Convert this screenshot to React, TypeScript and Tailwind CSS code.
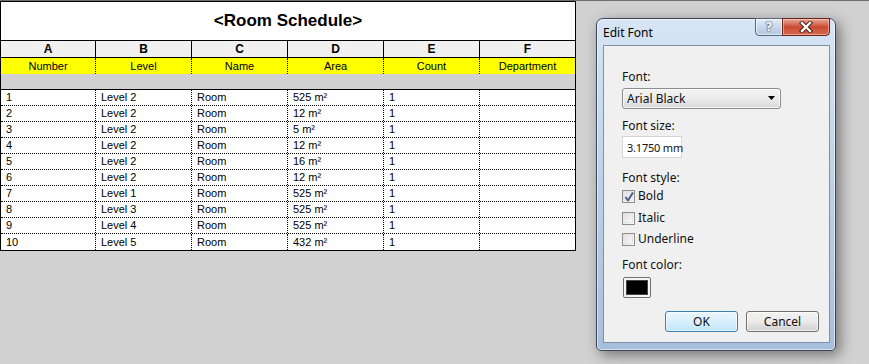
import React from 'react';

const cols = ['A', 'B', 'C', 'D', 'E', 'F'];
const heads = ['Number', 'Level', 'Name', 'Area', 'Count', 'Department'];
const widths = ['w-[95px]', 'w-[96px]', 'w-[96px]', 'w-[96px]', 'w-[96px]', 'flex-1'];

const rows = [
  ['1', 'Level 2', 'Room', '525 m²', '1', ''],
  ['2', 'Level 2', 'Room', '12 m²', '1', ''],
  ['3', 'Level 2', 'Room', '5 m²', '1', ''],
  ['4', 'Level 2', 'Room', '12 m²', '1', ''],
  ['5', 'Level 2', 'Room', '16 m²', '1', ''],
  ['6', 'Level 2', 'Room', '12 m²', '1', ''],
  ['7', 'Level 1', 'Room', '525 m²', '1', ''],
  ['8', 'Level 3', 'Room', '525 m²', '1', ''],
  ['9', 'Level 4', 'Room', '525 m²', '1', ''],
  ['10', 'Level 5', 'Room', '432 m²', '1', ''],
];

function Checkbox({ checked }: { checked?: boolean }) {
  return (
    <div className="w-[13px] h-[13px] border border-[#8e8f8f] bg-gradient-to-br from-[#dcdcdc] to-[#fbfbfb] flex items-center justify-center">
      <div className="w-[9px] h-[9px] border border-[#e6e6e6] bg-gradient-to-br from-[#e2e2e2] to-[#f8f8f8] relative">
        {checked && (
          <svg className="absolute -left-[2px] -top-[3px]" width="12" height="13" viewBox="0 0 12 13">
            <path d="M2.5 7 L5 10.5 L10 2.5" fill="none" stroke="#4a5f8f" strokeWidth="2" strokeLinejoin="round" />
          </svg>
        )}
      </div>
    </div>
  );
}

function Schedule() {
  return (
    <div className="w-[576px] border-x border-t border-black font-[family-name:'Liberation_Sans',Arial,sans-serif] text-black">
      <div className="h-[39px] bg-white border-b border-black flex items-center justify-center text-[17px] font-bold">
        &lt;Room Schedule&gt;
      </div>
      <div className="h-[17px] flex bg-[#f0f0f0] border-b border-black">
        {cols.map((c, i) => (
          <div
            key={c}
            className={`${widths[i]} ${i < 5 ? 'border-r border-black' : ''} flex items-center justify-center text-[12px] font-bold leading-none`}
          >
            {c}
          </div>
        ))}
      </div>
      <div className="h-[16px] flex bg-[#ffff00]">
        {heads.map((h, i) => (
          <div
            key={h}
            className={`${widths[i]} ${i < 5 ? 'border-r border-dotted border-black' : ''} flex items-center justify-center text-[11px] leading-none`}
          >
            {h}
          </div>
        ))}
      </div>
      <div className="h-[15px] bg-[#d1d1d1]" />
      <div className="bg-white border-t border-b border-black">
        {rows.map((r, ri) => (
          <div
            key={ri}
            className={`h-[16px] flex ${ri < rows.length - 1 ? 'border-b border-dotted border-black' : ''}`}
          >
            {r.map((v, i) => (
              <div
                key={i}
                className={`${widths[i]} ${i < 5 ? 'border-r border-dotted border-black' : ''} flex items-center pl-[5px] text-[11px] leading-none`}
              >
                {v}
              </div>
            ))}
          </div>
        ))}
      </div>
    </div>
  );
}

function EditFont() {
  return (
    <div className="ml-[20px] mt-[17px] w-[240px] h-[333px] flex flex-col rounded-t-[7px] rounded-b-[5px] border border-[#3a4658] bg-gradient-to-b from-[#d7e5f5] via-[#bcd1e9] to-[#a6bfdc] shadow-[inset_0_0_0_1px_rgba(255,255,255,0.55),4px_4px_14px_rgba(0,0,0,0.45)] font-[family-name:'Noto_Sans','Open_Sans',sans-serif] text-[12px] text-[#111]">
      <div className="h-[26px] flex justify-between pl-[6px] pr-[5px]">
        <div className="self-center mt-[1px] text-[12px] text-black">Edit Font</div>
        <div className="flex -mt-px h-[18px]">
          <div className="w-[28px] h-[18px] rounded-bl-[4px] border border-[#55677f] bg-gradient-to-b from-[#e4edf7] via-[#c8d8ea] to-[#b3c8e1] shadow-[inset_0_0_0_1px_rgba(255,255,255,0.6)] flex items-center justify-center text-white font-bold text-[12px] leading-none [text-shadow:0_0_1px_#25344a,0_0_2px_#25344a] font-[family-name:'DejaVu_Sans',sans-serif]">
            ?
          </div>
          <div className="w-[48px] h-[18px] -ml-px rounded-br-[4px] border border-[#6b2418] bg-gradient-to-b from-[#e9a899] via-[#c94a33] to-[#d76a4e] shadow-[inset_0_0_0_1px_rgba(255,220,210,0.5)] flex items-center justify-center">
            <svg width="14" height="12" viewBox="0 0 14 12">
              <path d="M3 2 L11 10 M11 2 L3 10" stroke="#3b1610" strokeWidth="4.2" strokeLinecap="square" />
              <path d="M3 2 L11 10 M11 2 L3 10" stroke="#ffffff" strokeWidth="2.4" strokeLinecap="square" />
            </svg>
          </div>
        </div>
      </div>
      <div className="ml-[6px] mr-[5px] h-[298px] border border-[#7e91a9] bg-[#f0f0f0] flex flex-col pl-[18px] pt-[23px]">
        <div className="h-[16px] leading-[16px]">Font:</div>
        <div className="mt-[3px] w-[159px] h-[21px] rounded-[3px] border border-[#8c8c8c] bg-gradient-to-b from-[#f3f3f3] via-[#ebebeb] to-[#d9d9d9] shadow-[inset_0_0_0_1px_rgba(255,255,255,0.7)] flex items-center justify-between pl-[4px] pr-[4px]">
          <span className="leading-none">Arial Black</span>
          <svg width="8" height="5" viewBox="0 0 8 5">
            <path d="M0 0 H7 L3.5 4 Z" fill="#000" />
          </svg>
        </div>
        <div className="mt-[9px] h-[16px] leading-[16px]">Font size:</div>
        <div className="mt-[2px] w-[60px] h-[22px] border border-[#d5d5d5] bg-white flex items-center pl-[4px] whitespace-nowrap">
          <span className="leading-none text-[11px] tracking-[-0.2px]">3.1750 mm</span>
        </div>
        <div className="mt-[12px] h-[16px] leading-[16px]">Font style:</div>
        <div className="mt-[2px] h-[16px] flex items-center gap-[3px]">
          <Checkbox checked />
          <span className="leading-none">Bold</span>
        </div>
        <div className="mt-[6px] h-[16px] flex items-center gap-[3px]">
          <Checkbox />
          <span className="leading-none">Italic</span>
        </div>
        <div className="mt-[5px] h-[16px] flex items-center gap-[3px]">
          <Checkbox />
          <span className="leading-none">Underline</span>
        </div>
        <div className="mt-[10px] h-[16px] leading-[16px]">Font color:</div>
        <div className="mt-[4px] ml-px w-[28px] h-[21px] rounded-[2px] border border-[#707070] bg-[#f4f4f4] p-[2px]">
          <div className="w-full h-full bg-black border border-[#444]" />
        </div>
        <div className="mt-[13px] mr-[10px] flex justify-end gap-[8px]">
          <div className="w-[73px] h-[21px] rounded-[3px] border border-[#3c7fb1] bg-gradient-to-b from-[#eaf6fd] via-[#d9f0fc] to-[#bee6fd] shadow-[inset_0_0_0_1px_rgba(255,255,255,0.6)] flex items-center justify-center leading-none">
            OK
          </div>
          <div className="w-[73px] h-[21px] rounded-[3px] border border-[#707070] bg-gradient-to-b from-[#f2f2f2] via-[#ebebeb] to-[#cfcfcf] shadow-[inset_0_0_0_1px_rgba(255,255,255,0.7)] flex items-center justify-center leading-none">
            Cancel
          </div>
        </div>
      </div>
    </div>
  );
}

export default function App() {
  return (
    <div className="w-[869px] h-[364px] bg-[#d1d1d1] border-t border-[#6e6e6e] flex items-start overflow-hidden">
      <Schedule />
      <EditFont />
    </div>
  );
}
